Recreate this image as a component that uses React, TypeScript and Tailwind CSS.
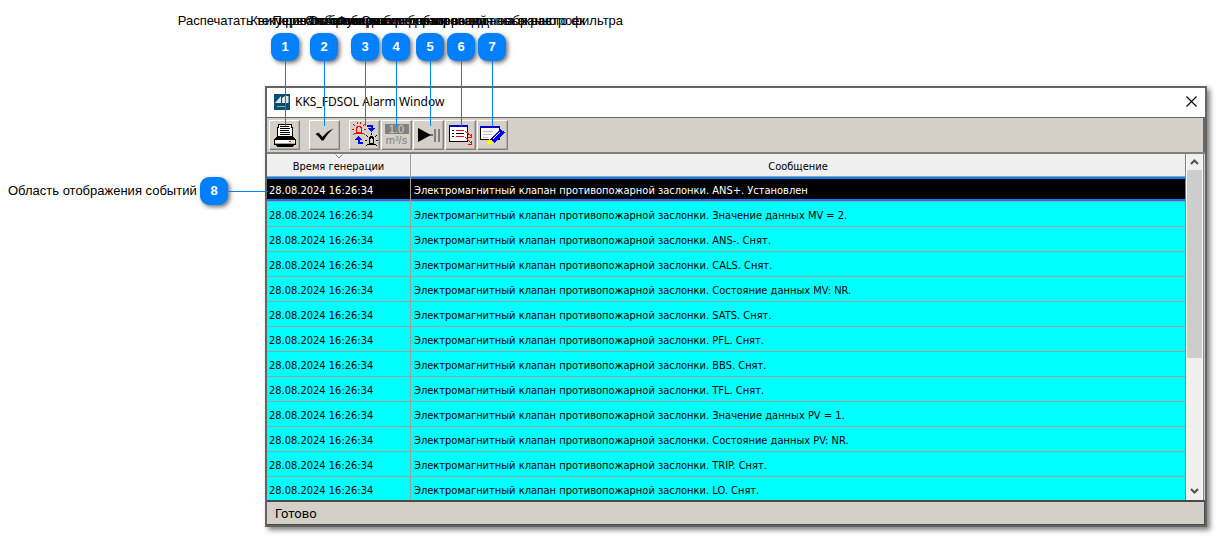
import type { ReactNode } from "react";

const PREFIX = "Электромагнитный клапан противопожарной заслонки. ";
const TIME = "28.08.2024 16:26:34";

const events = [
  "ANS+. Установлен",
  "Значение данных MV = 2.",
  "ANS-. Снят.",
  "CALS. Снят.",
  "Состояние данных MV: NR.",
  "SATS. Снят.",
  "PFL. Снят.",
  "BBS. Снят.",
  "TFL. Снят.",
  "Значение данных PV = 1.",
  "Состояние данных PV: NR.",
  "TRIP. Снят.",
  "LO. Снят.",
];

const callouts = [
  { place: "left-[271px]", text: "Распечатать текущие события окна" },
  { place: "left-[310px]", text: "Квитировать сообщение" },
  { place: "left-[351px]", text: "Переключение режима обзора" },
  { place: "left-[382px]", text: "Отображение всех измерений" },
  { place: "left-[416px]", text: "Остановка обновления вывода на экран" },
  { place: "left-[447px]", text: "Функция выбора и ввода новых настроек" },
  { place: "left-[478px]", text: "Окно редактирования выбранного фильтра" },
];

function Badge({ children }: { children: ReactNode }) {
  return (
    <span className="flex h-7 w-7 shrink-0 items-center justify-center rounded-[9px] bg-[#0080ff] text-[13px] font-bold text-white shadow-[2px_2px_4px_rgba(0,0,0,0.55)]">
      {children}
    </span>
  );
}

function ToolButton({ label, children }: { label: string; children: ReactNode }) {
  return (
    <button
      type="button"
      aria-label={label}
      className="flex h-[30px] w-[31px] shrink-0 items-center justify-center border border-t-white border-r-[#808080] border-b-[#808080] border-l-white bg-[#d4d0c8] shadow-[inset_-1px_-1px_0_#b0aca4]"
    >
      {children}
    </button>
  );
}

function PrintIcon() {
  return (
    <svg width="24" height="25" viewBox="0 0 24 25" shapeRendering="crispEdges">
      <path d="M5.500 1.500h13v3h1v10h-15v-10h1z" fill="#fff" stroke="#000" />
      <path d="M7 3.500h9M7 5.500h10M7 7.500h9M7 9.500h10M7 11.500h10" stroke="#000" />
      <path d="M4 13.500h16M3 14.500h18M2 15.500h20" stroke="#000" />
      <path d="M1.500 16.500h21v5h-21z" fill="#fff" stroke="#000" />
      <path d="M2 20.500h20" stroke="#a0a0a0" />
      <path d="M16 18h2v1h-2z" fill="#f00" />
      <path d="M19 18h2v1h-2z" fill="#fc0" />
      <path d="M3 22.500h18M4 23.500h16" stroke="#000" />
    </svg>
  );
}

function CheckIcon() {
  return (
    <svg width="22" height="20" viewBox="0 0 22 20">
      <path d="M1.500 9l3-1.500 4 4.500c3-4 7-7 11-8.500-4 3.500-7 7-10 12H7.500C6 13 4 11 1.500 9z" fill="#000" />
    </svg>
  );
}

function SwitchIcon() {
  return (
    <svg width="26" height="26" viewBox="0 0 26 26" shapeRendering="crispEdges" fill="none">
      <g stroke="#f00">
        <path d="M4.500 11V6.500l1-2h3l1 2V11z" strokeWidth="1.500" />
        <path d="M3 11.500h8M1 2l2 2M11 4l2-2M0 7.500h2M12 7.500h2M5.500 0v2M8.500 0v2M1 13l2-2M11 11l2 2" />
      </g>
      <g stroke="#000">
        <path d="M17.500 22v-5l1-2h2l1 2v5z" strokeWidth="1.500" />
        <path d="M15 22.500h9M14 13l2 2M23 15l2-2M13 18.500h2M24 18.500h2M19.500 11v2M14 24l1-1M24 23l1 1" />
      </g>
      <path d="M15 3.500h4.500V7" stroke="#00f" strokeWidth="2" />
      <path d="M16 6h7l-3.500 4z" fill="#00f" />
      <path d="M11 20.500H6.500V18" stroke="#00f" strokeWidth="2" />
      <path d="M3 18h7l-3.500-4z" fill="#00f" />
    </svg>
  );
}

function PlayIcon() {
  return (
    <svg width="26" height="22" viewBox="0 0 26 22">
      <path d="M2 4l13 7-13 7z" fill="#000" />
      <path d="M18 5h2v13h-2zM22 5h2v13h-2z" fill="#808080" />
      <path d="M14 11h3" stroke="#000" />
    </svg>
  );
}

function ListIcon() {
  return (
    <svg width="26" height="24" viewBox="0 0 26 24" shapeRendering="crispEdges" fill="none">
      <path d="M1.500 3.500h18v15h-18z" fill="#fff" stroke="#000" />
      <path d="M1 3h19" stroke="#00c" strokeWidth="2" />
      <path d="M8 7.500h8M8 13.500h8" stroke="#f00" />
      <path d="M4 7.500h2M4 10.500h2M8 10.500h8M4 13.500h2" stroke="#000" />
      <path d="M17 8l6 5M20 14.500h3.500V11M17 14l6 6M20 21.500h3.500V18" stroke="#f00" />
    </svg>
  );
}

function EditIcon() {
  return (
    <svg width="27" height="24" viewBox="0 0 27 24" shapeRendering="crispEdges" fill="none">
      <path d="M1.500 3.500h19v13h-19z" fill="#fff" stroke="#000" />
      <path d="M1 4h20" stroke="#00c" strokeWidth="2" />
      <path d="M4 8.500h10M4 11.500h9M4 14.500h5" stroke="#c0c0c0" />
      <path d="M11 16L21 6l5 3L15 20z" fill="#00f" />
      <path d="M14 16l7-7" stroke="#fff" />
      <path d="M10 16l5 4-7 2z" fill="#ff0" />
    </svg>
  );
}

export default function App() {
  return (
    <div className="relative bg-white font-['Liberation_Sans',sans-serif] text-black">
      <main className="pt-[86px] pr-[9px] pb-[9px] pl-[265px]">
        <section className="border-2 border-[#636363] shadow-[3px_3px_5px_rgba(0,0,0,0.5)]">
          <header className="flex h-[29px] items-center bg-white pr-2 pb-0.5 pl-[7px]">
            <svg width="16" height="16" viewBox="0 0 16 16">
              <path d="M0 0h16v16H0z" fill="#0b4d70" />
              <path d="M1 9l6-7v7zM8 9V4l3-2v7zM12 9V2h2.500v7z" fill="#dce8ee" />
              <path d="M3 12.500h8" stroke="#8fb0c0" />
            </svg>
            <h1 className="ml-[5px] font-['Noto_Sans',sans-serif] text-xs whitespace-nowrap">KKS_FDSOL Alarm Window</h1>
            <button type="button" aria-label="Закрыть" className="ml-auto">
              <svg width="11" height="11" viewBox="0 0 11 11">
                <path d="M.5.5l10 10M10.500.5l-10 10" stroke="#000" strokeWidth="1.100" />
              </svg>
            </button>
          </header>

          <div className="flex h-[37px] items-center gap-px border-t border-b-2 border-t-[#636363] border-b-[#808080] bg-[#d4d0c8] pl-0.5 shadow-[inset_-2px_0_0_#6b6762]">
            <ToolButton label="Распечатать"><PrintIcon /></ToolButton>
            <div className="ml-2 flex">
              <ToolButton label="Квитировать"><CheckIcon /></ToolButton>
            </div>
            <div className="ml-2 flex">
              <ToolButton label="Переключить"><SwitchIcon /></ToolButton>
            </div>
            <ToolButton label="Единицы измерения">
              <span className="flex flex-col items-center text-[11px] leading-3 text-[#808080]">
                <span className="w-6 bg-[#808080] leading-[10px] text-[#d4d0c8]">1.0</span>
                <span>m³/s</span>
              </span>
            </ToolButton>
            <ToolButton label="Пуск / пауза"><PlayIcon /></ToolButton>
            <ToolButton label="Список"><ListIcon /></ToolButton>
            <ToolButton label="Фильтр"><EditIcon /></ToolButton>
          </div>

          <div className="flex h-[346px] font-['DejaVu_Sans_Condensed','DejaVu_Sans',sans-serif] text-[11px] leading-4">
            <div className="min-w-0 flex-1 overflow-hidden border-r border-[#808080]">
              <table className="w-full table-fixed border-separate border-spacing-0">
                <thead>
                  <tr className="h-[23px] bg-[#f0f0f0]">
                    <th className="relative w-36 border-r border-b border-[#a0a0a0] p-0 pt-[3px] font-normal">
                      <svg className="absolute top-0 left-[68px]" width="8" height="5" viewBox="0 0 8 5">
                        <path d="M.5.5L4 4 7.500.5" fill="none" stroke="#808080" />
                      </svg>
                      Время генерации
                    </th>
                    <th className="border-b border-[#a0a0a0] p-0 pt-[3px] font-normal">Сообщение</th>
                  </tr>
                </thead>
                <tbody>
                  {events.map((event, i) => (
                    <tr
                      key={event}
                      className={
                        i === 0
                          ? "h-[25px] bg-black text-white shadow-[inset_0_2px_0_#0080ff,inset_0_-3px_0_#0080ff]"
                          : "h-[25px] bg-[#00ffff]"
                      }
                    >
                      <td className="border-r border-b border-[#a0a0a0] p-0 pt-[3px] pl-0.5 whitespace-nowrap">{TIME}</td>
                      <td className="border-b border-[#a0a0a0] p-0 pt-[3px] pl-[3px] whitespace-nowrap">{PREFIX + event}</td>
                    </tr>
                  ))}
                </tbody>
              </table>
            </div>
            <div className="flex w-[17px] flex-col border-x border-white bg-[#f0f0f0]">
              <button type="button" aria-label="Вверх" className="flex h-4 items-center justify-center">
                <svg width="9" height="6" viewBox="0 0 9 6">
                  <path d="M1 5l3.500-3.500L8 5" fill="none" stroke="#505050" strokeWidth="2" />
                </svg>
              </button>
              <div className="h-[188px] bg-[#cdcdcd]" />
              <button type="button" aria-label="Вниз" className="mt-auto flex h-[19px] items-center justify-center">
                <svg width="9" height="6" viewBox="0 0 9 6">
                  <path d="M1 1l3.500 3.500L8 1" fill="none" stroke="#505050" strokeWidth="2" />
                </svg>
              </button>
            </div>
            <div className="w-0.5 border-l border-[#808080] bg-[#d4d0c8]" />
          </div>

          <footer className="flex h-[25px] items-center border-t-2 border-b border-[#4a4a4a] bg-[#d4d0c8] pt-0.5 pl-2 font-['Roboto',sans-serif] text-[13px] shadow-[inset_-1px_0_0_#4a4a4a]">
            Готово
          </footer>
        </section>
      </main>

      {callouts.map((callout, i) => (
        <div key={callout.text} className={`absolute top-3 flex w-7 flex-col items-center ${callout.place}`}>
          <span className="flex h-[21px] text-[13px] leading-[18px] whitespace-nowrap">{callout.text}</span>
          <Badge>{i + 1}</Badge>
          <span className="h-[65px] w-px bg-[#0080ff]" />
        </div>
      ))}
      <div className="absolute top-[177px] left-2 flex items-center">
        <span className="w-48 text-[13px] whitespace-nowrap">Область отображения событий</span>
        <Badge>8</Badge>
        <span className="h-px w-10 bg-[#0080ff]" />
      </div>
    </div>
  );
}
